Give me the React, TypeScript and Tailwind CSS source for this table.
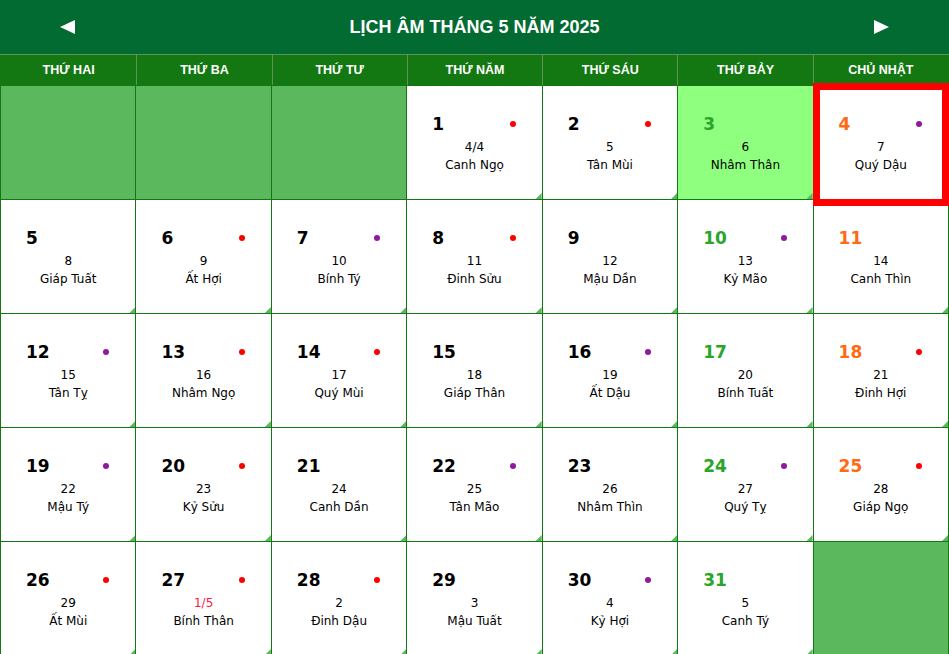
type Day = {
  d: number;
  lunar: string;
  canChi: string;
  dot?: "red" | "purple";
};

const days: Day[] = [
  { d: 1, lunar: "4/4", canChi: "Canh Ngọ", dot: "red" },
  { d: 2, lunar: "5", canChi: "Tân Mùi", dot: "red" },
  { d: 3, lunar: "6", canChi: "Nhâm Thân" },
  { d: 4, lunar: "7", canChi: "Quý Dậu", dot: "purple" },
  { d: 5, lunar: "8", canChi: "Giáp Tuất" },
  { d: 6, lunar: "9", canChi: "Ất Hợi", dot: "red" },
  { d: 7, lunar: "10", canChi: "Bính Tý", dot: "purple" },
  { d: 8, lunar: "11", canChi: "Đinh Sửu", dot: "red" },
  { d: 9, lunar: "12", canChi: "Mậu Dần" },
  { d: 10, lunar: "13", canChi: "Kỷ Mão", dot: "purple" },
  { d: 11, lunar: "14", canChi: "Canh Thìn" },
  { d: 12, lunar: "15", canChi: "Tân Tỵ", dot: "purple" },
  { d: 13, lunar: "16", canChi: "Nhâm Ngọ", dot: "red" },
  { d: 14, lunar: "17", canChi: "Quý Mùi", dot: "red" },
  { d: 15, lunar: "18", canChi: "Giáp Thân" },
  { d: 16, lunar: "19", canChi: "Ất Dậu", dot: "purple" },
  { d: 17, lunar: "20", canChi: "Bính Tuất" },
  { d: 18, lunar: "21", canChi: "Đinh Hợi", dot: "red" },
  { d: 19, lunar: "22", canChi: "Mậu Tý", dot: "purple" },
  { d: 20, lunar: "23", canChi: "Kỷ Sửu", dot: "red" },
  { d: 21, lunar: "24", canChi: "Canh Dần" },
  { d: 22, lunar: "25", canChi: "Tân Mão", dot: "purple" },
  { d: 23, lunar: "26", canChi: "Nhâm Thìn" },
  { d: 24, lunar: "27", canChi: "Quý Tỵ", dot: "purple" },
  { d: 25, lunar: "28", canChi: "Giáp Ngọ", dot: "red" },
  { d: 26, lunar: "29", canChi: "Ất Mùi", dot: "red" },
  { d: 27, lunar: "1/5", canChi: "Bính Thân", dot: "red" },
  { d: 28, lunar: "2", canChi: "Đinh Dậu", dot: "red" },
  { d: 29, lunar: "3", canChi: "Mậu Tuất" },
  { d: 30, lunar: "4", canChi: "Kỷ Hợi", dot: "purple" },
  { d: 31, lunar: "5", canChi: "Canh Tý" },
];

const weekdays = ["THỨ HAI", "THỨ BA", "THỨ TƯ", "THỨ NĂM", "THỨ SÁU", "THỨ BẢY", "CHỦ NHẬT"];

const LEAD = 3; // May 1st 2025 is a Thursday
const TODAY = 4;

function Corner() {
  return (
    <span className="absolute bottom-0 right-0 h-[6px] w-[6px] bg-[#5cb85c] [clip-path:polygon(100%_0,100%_100%,0_100%)]" />
  );
}

function DayCell({ day, col }: { day: Day; col: number }) {
  const isSat = col === 5;
  const isSun = col === 6;
  const numColor = isSat ? "text-[#2aa52a]" : isSun ? "text-[#ff6a13]" : "text-black";
  const bg = isSat && day.d === 3 ? "bg-[#8fff7f]" : "bg-white";
  const lunarColor = day.lunar.includes("/") && day.lunar !== "4/4" ? "text-[#ff1744]" : "text-black";

  return (
    <div className={`relative h-[113px] ${bg} pt-[28px]`}>
      <div className="flex h-[20px] items-center justify-between pl-[25px] pr-[26px]">
        <span className={`font-['DejaVu_Sans',sans-serif] text-[17px] font-bold leading-none ${numColor}`}>
          {day.d}
        </span>
        {day.dot && (
          <span
            className={`h-[6px] w-[6px] rounded-full ${day.dot === "red" ? "bg-[#ff0000]" : "bg-[#8e1a9c]"}`}
          />
        )}
      </div>
      <div className="mt-[4px] text-center font-['DejaVu_Sans',sans-serif] text-[12px] leading-[18px] text-black">
        <div className={lunarColor}>{day.lunar}</div>
        <div>{day.canChi}</div>
      </div>
      <Corner />
      {day.d === TODAY && (
        <span className="absolute -left-px -right-px -top-[3px] -bottom-[7px] z-10 border-[7px] border-[#ff0000]" />
      )}
    </div>
  );
}

export default function App() {
  const cells: (Day | null)[] = [
    ...Array.from({ length: LEAD }, () => null),
    ...days,
  ];
  while (cells.length % 7 !== 0) cells.push(null);

  return (
    <div className="w-[949px] bg-white font-['Liberation_Sans',Arial,sans-serif]">
      <div className="grid h-[54px] grid-cols-7 items-center bg-[#016b32] text-white">
        <div className="flex justify-center">
          <svg width="15" height="14" viewBox="0 0 15 14">
            <path d="M0 7 L15 0 L15 14 Z" fill="white" />
          </svg>
        </div>
        <h1 className="col-span-5 text-center text-[18px] font-bold">LỊCH ÂM THÁNG 5 NĂM 2025</h1>
        <div className="flex justify-center">
          <svg width="15" height="14" viewBox="0 0 15 14">
            <path d="M15 7 L0 0 L0 14 Z" fill="white" />
          </svg>
        </div>
      </div>

      <div className="grid h-[31px] grid-cols-7 border-t border-[#5f9452] bg-[#137811] px-px">
        {weekdays.map((w, i) => (
          <div
            key={w}
            className={`flex items-center justify-center text-[12.5px] font-bold text-white ${i > 0 ? "border-l border-[#5f9452]" : ""}`}
          >
            {w}
          </div>
        ))}
      </div>

      <div className="grid grid-cols-7 gap-px bg-[#137811] p-px pb-0">
        {cells.map((c, i) =>
          c ? (
            <DayCell key={i} day={c} col={i % 7} />
          ) : (
            <div key={i} className="h-[113px] bg-[#5cb85c]" />
          )
        )}
      </div>
    </div>
  );
}
